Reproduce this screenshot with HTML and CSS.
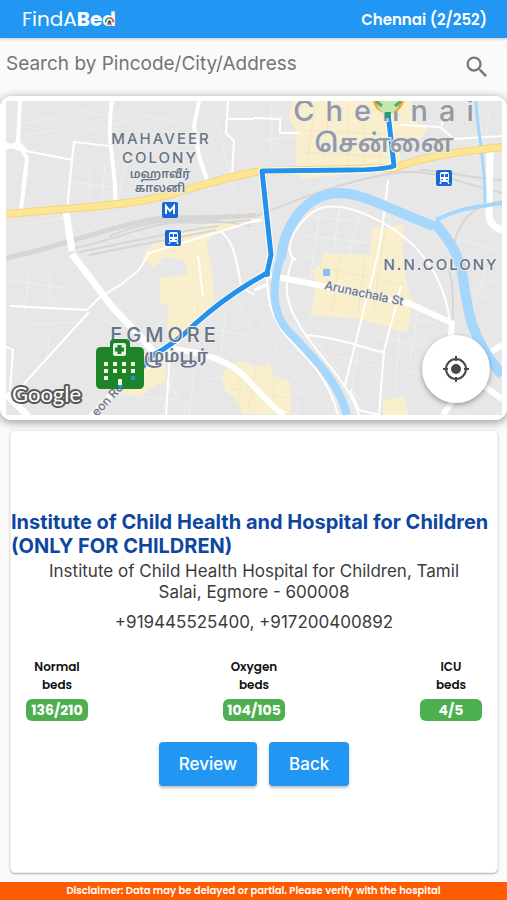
FILE: index.html
```html
<!DOCTYPE html>
<html lang="en">
<head>
<meta charset="utf-8">
<meta name="viewport" content="width=device-width, initial-scale=1">
<title>FindABed</title>
<link rel="stylesheet" href="styles.css">
</head>
<body>
<header class="topbar">
  <div class="brand">FindA<b>Bed</b>
    <svg class="brand-mark" viewBox="0 0 10 10" aria-hidden="true"><circle cx="5" cy="5" r="4.5" fill="#fff"/><path d="M1 6a4 4 0 0 1 4-5" fill="none" stroke="#34a853" stroke-width="1.8"/><path d="M5 1a4 4 0 0 1 4 5" fill="none" stroke="#ea4335" stroke-width="1.8"/><path d="M3 8V5l2-2 2 2v3z" fill="#4a6572"/><path d="M2 8.5h6" stroke="#ea6a35" stroke-width="1"/></svg>
  </div>
  <div class="place">Chennai (2/252)</div>
</header>

<form class="search">
  <input class="search-input" type="text" aria-label="Search by Pincode/City/Address" placeholder="Search by Pincode/City/Address">
  <button class="search-button" type="button" aria-label="Search">
    <svg viewBox="0 0 24 24"><path fill="#777" d="M15.5 14h-.79l-.28-.27A6.471 6.471 0 0 0 16 9.5 6.5 6.5 0 1 0 9.5 16c1.61 0 3.09-.59 4.23-1.57l.27.28v.79l5 4.99L20.49 19l-4.99-5zm-6 0C7.01 14 5 11.99 5 9.5S7.01 5 9.5 5 14 7.01 14 9.5 11.99 14 9.5 14z"/></svg>
  </button>
</form>

<main class="content">
<section class="map" aria-label="Map">
  <svg class="map-canvas" viewBox="6 101 496 314" preserveAspectRatio="xMidYMid slice">
    <rect x="6" y="101" width="496" height="314" fill="#e7e7e8"/>

    <g fill="none" stroke="#f0f0f1" stroke-width="1">
      <path d="M18 125l40-8M25 135l34-5M80 110l50 12M90 130l30-6M140 115l40 8M90 170v40M105 165l-4 45M125 165l-8 40M30 165l-10 45M60 180l60 8M215 115l20 80M190 130l20 60M20 225l50-8M110 222l30 14M95 235l55-14M225 200l15 20"/>
      <path d="M10 280l55 8M30 265l-6 50M50 270v40M85 275l-35 30M100 320l40 10M110 290l25-20M140 280l-16 20M30 325l60-4M50 335l-5 35M160 375l30 35M175 370l-12 40M195 365l-6 50M205 380l35-6M120 395l60 5M215 330l35 5M225 315l-6 60M232 290l20 40"/>
      <path d="M305 215l60 8M300 235l70 8M320 210l-10 70M340 205l-12 90M360 210l-14 60M300 255l30 6M380 310l60 15M370 335l70 15M345 330l-50 30M330 355l50 12M360 340l-12 70M315 340l45 60M400 330l-5 60M405 370l40 10M420 300l-10 60M450 300l45-20M485 270l-15 50M480 295l22 10M395 115l50 8M480 120l-5 40M490 110l-6 40"/>
      <path d="M270 115l25 6M265 140l35-4M272 105v50M420 175l60 8M435 215l60-12M445 235l50 15M345 180l-35 10M290 390l40 15M260 320l35 60M300 400l-5 15"/>
    </g>

    <g fill="#f9efcd">
      <path d="M292 101h118l2 17 16 10-8 12-20 3v25l-98 11-6-5v-42l-7-15z"/>
      <path d="M323 253l47 2 2-24 32-7-2 30 5 31 3 12-3 35-53-14-44-3 6-30-4-15 9-5z"/>
      <path d="M373 226l30 6-4 46-28 2zM407 295l6 2-5 35-15-3z"/>
      <path d="M142 259c8-19 27-25 47-28l42-15 24-6v11l-42 14-7 8 6 26 2 34-20 18-12 18-15-2 1-33h-8v-26l28-4-4-14-20-3-10 10z"/>
      <path d="M120 388l25-36 20-3 1 32-17 7-8 8-18-2zM228 364l18-2 12 6 12-6 4 26 17 4v22h-48l-8-16-10-8-3-14zM383 400l22-3 3 18h-25z"/>
      <path d="M254 366h10l4 8 22 7v33h-36z"/>
    </g>
    <g fill="none" stroke="#f2e7c0">
      <path d="M303 130l98 5M300 152l95 5M315 103l-8 60M330 103l-8 65M347 103v65M365 125v45M380 130v35M320 267l85 18M325 285l78 15M340 255l-8 58M365 258l-8 65M385 232l-12 80M162 304h28M198 305l-4 30M232 372l38 34M240 365v45M256 370l-8 40M274 375v38M230 388l58 10"/>
    </g>

    <g fill="none" stroke="#d5d6d8" stroke-linecap="round">
      <path d="M6 258c60-12 95-30 150-39 35-3 70 0 98-4" stroke-width="5"/>
      <path d="M75 248c50-10 70-26 120-27M80 252c50-10 80-18 138-26M90 255c45-10 75-14 125-25M110 236c40-18 90-20 140-10M140 221c40 1 70 4 110-1" stroke-width="2"/>
      <path d="M254 217c40-16 85-35 140-44 40-5 65 10 108 20M420 170c30 1 45 8 82 10M502 201c-30 4-45 20-49 50M449 270c5 15 4 40 4 67" stroke-width="2"/>
    </g>

    <g fill="none" stroke="#fff" stroke-linejoin="round">
      <path d="M20 101l-2 42-12 5M6 144l16 6 5 8-6 52M18 143l8 8" stroke-width="4"/>
      <path d="M26 151l46 9-5 50M72 160l2-18 35 4" stroke-width="2"/>
      <path d="M112 101c-7 42 5 67 3 100M199 101l-5 25 5 30 8 24" stroke-width="4"/>
      <path d="M228 101l-2 32 8 8-2 34M227 119h27M254 118l26 1v14h20M400 125l40 2 14 12 48-3M442 126l2-16" stroke-width="2"/>
      <path d="M66 211l6 40M72 254l41 54 28 29 15 18M6 394l22 22" stroke-width="7"/>
      <path d="M254 221l-45 14-60 18-10 17-20 16-19 11-13 13-77-4M89 312l-67 74M220 231c10 7 16 20 21 56l13 8M198 255l5 42M6 347l7 3-3 40M170 352l-4 63" stroke-width="2"/>
      <path d="M92 415l35-37M161 348c30 2 65 8 85 30 16 16 23 27 38 37M262 274l56 11 90 18 44 20-2 25M502 345l-19 12-40 58M483 385l19 14" stroke-width="6"/>
      <path d="M296 260c-18-10 5-45 25-52 25-7 70 14 95 40 18 20 30 42 34 75M293 258c-14 35-2 56 14 79 20 27 42 48 52 78M267 276c0 30 8 49 25 66 20 21 37 38 46 73M305 335c30 2 49 10 80 18M388 180c-4 36-7 70-21 117l-22 88M401 286l-17 65-5 64M350 390l9 20 20 5" stroke-width="2"/>
      <path d="M490 152l-1 62q0 12 13 16" stroke-width="7"/>
      <path d="M254 221l8-1M266 285l-12 5" stroke-width="3"/>
    </g>

    <g fill="none" stroke="#a4d7fb" stroke-linejoin="round">
      <path d="M281 260c2-31 22-65 57-67 27 0 52 17 96 33" stroke-width="10"/>
      <path d="M281 256c-11 35-8 60 9 77 26 27 49 50 57 82" stroke-width="8"/>
      <path d="M434 222c19 22 26 37 29 56 5 35 8 60 39 97" stroke-width="10"/>
      <path d="M436 220c25-13 43-13 66-17" stroke-width="4"/>
      <path d="M476 101c1 30 10 65 9 102" stroke-width="3"/>
    </g>
    <path d="M323 269h7v7h-7z" fill="#83c2f6"/>

    <g fill="none" stroke-linejoin="round">
      <path d="M6 214l59-5c60-5 88-8 120-19 31-9 54-16 77-19l132-3c35-13 65-16 108-21" stroke="#f5d57a" stroke-width="8"/>
      <path d="M6 214l59-5c60-5 88-8 120-19 31-9 54-16 77-19l132-3c35-13 65-16 108-21" stroke="#fee596" stroke-width="6"/>
    </g>

    <text class="street" x="324" y="289" transform="rotate(12 324 289)">Arunachala St</text>
    <text class="street" x="97" y="417" transform="rotate(-47 97 417)">eon Road</text>

    <g fill="none" stroke-linejoin="round" stroke-linecap="round">
      <path d="M388 113l6 53q-12 4-45 4l-87 1 9 84-4 18-17 10q-28 17-55 41-18 18-43 32l-20 23" stroke="#fff" stroke-width="7"/>
      <path d="M388 113l6 53q-12 4-45 4l-87 1 9 84-4 18-17 10q-28 17-55 41-18 18-43 32l-20 23" stroke="#2491ea" stroke-width="5"/>
      <circle cx="267" cy="274" r="3" fill="#2491ea"/>
    </g>

    <g class="district" text-anchor="middle">
      <text x="161" y="144" class="spaced">MAHAVEER</text>
      <text x="160" y="163" class="spaced">COLONY</text>
      <text x="160" y="178" class="tamil-small">மஹாவீர்</text>
      <text x="160" y="192" class="tamil-small">காலனி</text>
      <text x="441" y="270" class="spaced">N.N.COLONY</text>
      <text x="165" y="342" class="large-spaced">EGMORE</text>
      <text x="169" y="362" class="tamil-mid">எழும்பூர்</text>
    </g>
    <g class="city" text-anchor="middle">
      <text x="389" y="121" class="city-name">Chennai</text>
      <text x="384" y="152" class="tamil-large">சென்னை</text>
    </g>

    <path d="M373 101h31c-2 8-7 12-16 12s-13-4-15-12z" fill="#f4a63a"/>
    <path d="M378 101h20c4 16-24 16-20 0z" fill="#c4e6af"/>
    <path d="M376 101l6 5M401 101l-6 5" stroke="#58af64" stroke-width="3"/>
    <path d="M385 112h6v6h-6z" fill="#229b82"/>

    <g>
      <rect x="162" y="202" width="16" height="16" rx="2" fill="#1967d2"/>
      <path d="M166 214v-8l4 5 4-5v8" fill="none" stroke="#fff" stroke-width="2"/>
    </g>
    <g id="station">
      <rect x="165" y="230" width="16" height="16" rx="2" fill="#1967d2"/>
      <rect x="169" y="232" width="9" height="10" rx="2" fill="#fff"/>
      <path d="M170 234h3v3h-3zM174 234h3v3h-3zM170 239h2v1h-2zM175 239h2v1h-2z" fill="#1967d2"/>
      <path d="M170 242l-1 2M177 242l1 2" stroke="#fff" stroke-width="1.5"/>
    </g>
    <use href="#station" x="271" y="-60"/>

    <path fill="#1d8428" d="M101 347h9v-4q0-4 4-4h11q5 0 5 4v4h9q5 0 5 5v32q0 5-5 5h-38q-5 0-5-5v-32q0-5 5-5z"/>
    <path d="M104 362h4v4h-4zM113 362h4v4h-4zM122 362h4v4h-4zM131 362h4v4h-4zM104 369h4v4h-4zM113 369h4v4h-4zM122 369h4v4h-4zM131 369h4v4h-4zM104 376h4v4h-4zM118 379h4v6h-4z" fill="#f3f3df"/>
    <rect x="113" y="343" width="13" height="13" rx="2" fill="#e9f0e5"/>
    <path d="M119.500 345v9M115 349.500h9" stroke="#1d8428" stroke-width="4"/>
    <path d="M131 376h4v4h-4zM118 385h5l-3 5z" fill="#2491ea"/>
    <text class="google" x="12" y="402">Google</text>
  </svg>
  <button class="locate" type="button" aria-label="My location">
    <svg viewBox="0 0 28 28"><g fill="none" stroke="#484848" stroke-width="2"><circle cx="14" cy="14" r="10"/><path d="M14 1v5M14 22v5M1 14h5M22 14h5"/></g><circle cx="14" cy="14" r="5" fill="#484848"/></svg>
  </button>
</section>

<article class="card">
  <h1 class="name">Institute of Child Health and Hospital for Children (ONLY FOR CHILDREN)</h1>
  <p class="address">Institute of Child Health Hospital for Children, Tamil Salai, Egmore - 600008</p>
  <p class="phones">+919445525400, +917200400892</p>
  <dl class="beds">
    <div class="bed"><dt>Normal beds</dt><dd>136/210</dd></div>
    <div class="bed"><dt>Oxygen beds</dt><dd>104/105</dd></div>
    <div class="bed"><dt>ICU beds</dt><dd>4/5</dd></div>
  </dl>
  <div class="actions">
    <button class="action" type="button">Review</button>
    <button class="action" type="button">Back</button>
  </div>
</article>
</main>

<footer class="disclaimer">Disclaimer: Data may be delayed or partial. Please verify with the hospital</footer>
</body>
</html>
```
FILE: styles.css
```css
* { box-sizing: border-box; }

body {
  margin: 0;
  min-height: 100vh;
  display: flex;
  flex-direction: column;
  background: #fafafa;
  color: #3c3c3c;
  font-family: Inter, "Liberation Sans", sans-serif;
}

.topbar {
  display: flex;
  align-items: center;
  justify-content: space-between;
  height: 38px;
  padding: 0 20px 0 22px;
  background: #2196f3;
  color: #fff;
  font-family: Poppins, Inter, sans-serif;
  box-shadow: 0 1px 3px rgba(0, 0, 0, .2);
}

.brand {
  position: relative;
  font-family: Poppins, Lato, sans-serif;
  font-size: 20px;
  line-height: 24px;
}

.brand-mark {
  position: absolute;
  right: 2px;
  bottom: 5px;
  width: 9px;
  height: 9px;
}

.place {
  font-size: 15px;
  font-weight: 600;
}

.search {
  display: flex;
  align-items: center;
  height: 58px;
  padding: 0 16px 0 6px;
}

.search-input {
  flex: 1;
  min-width: 0;
  padding: 0 0 6px;
  border: 0;
  outline: 0;
  background: none;
  font: 19px/24px Inter, sans-serif;
}

.search-input::placeholder { color: #757575; opacity: 1; }

.search-button {
  width: 28px;
  height: 28px;
  padding: 0;
  border: 0;
  background: none;
}

.search-button svg { display: block; width: 100%; }

.content {
  flex: 1;
  display: flex;
  flex-direction: column;
}

.map {
  position: relative;
  flex: none;
  border: solid #fff;
  border-width: 5px 5px 5px 6px;
  border-radius: 12px;
  box-shadow: 0 2px 8px 1px rgba(0, 0, 0, .35);
}

.map-canvas { display: block; width: 100%; }

.district, .city, .street {
  paint-order: stroke;
  stroke: #ececee;
  stroke-width: 2px;
  fill: #667484;
  font-family: Inter, "Noto Sans Tamil", "Noto Sans", sans-serif;
}

.spaced { font-size: 15px; font-weight: 500; letter-spacing: 2px; }
.large-spaced { font-size: 20px; font-weight: 500; letter-spacing: 4px; }
.tamil-small { font-size: 12px; font-weight: 600; }
.tamil-mid { font-size: 17px; font-weight: 600; }
.city { fill: #9599a2; }
.city-name { font-size: 29px; font-weight: 500; letter-spacing: 11px; }
.tamil-large { font-size: 25px; font-weight: 600; }
.street { font-size: 12px; font-weight: 500; fill: #6f7680; }

.google {
  paint-order: stroke;
  stroke: #595959;
  stroke-width: 4px;
  stroke-linejoin: round;
  fill: #fff;
  font: 22px Lato, sans-serif;
}

.locate {
  position: absolute;
  right: 12px;
  bottom: 12px;
  display: grid;
  place-items: center;
  width: 68px;
  height: 68px;
  padding: 0;
  border: 0;
  border-radius: 50%;
  background: #fff;
  box-shadow: 0 2px 5px rgba(0, 0, 0, .35);
}

.locate svg { width: 28px; height: 28px; }

.card {
  flex: 1;
  display: flex;
  flex-direction: column;
  justify-content: center;
  margin: 10px 9px 9px 10px;
  padding-bottom: 8px;
  border: 1px solid #efefef;
  border-radius: 5px;
  background: #fff;
  box-shadow: 0 1px 2px rgba(0, 0, 0, .3);
  text-align: center;
}

.name {
  margin: 0;
  color: #0d47a1;
  font-size: 20px;
  line-height: 24px;
  font-weight: 700;
  text-align: left;
}

.address, .phones {
  font-size: 17px;
  line-height: 21px;
}

.address { margin: 3px 32px 0; }
.phones { margin: 9px 0 0; }

.beds {
  display: flex;
  justify-content: space-between;
  margin: 25px 15px 0;
}

.bed {
  width: 62px;
  color: #111;
  font-family: Poppins, Inter, sans-serif;
  font-weight: 600;
}

.bed dt {
  padding: 0 6px;
  font-size: 12px;
  line-height: 18px;
}

.bed dd {
  margin: 5px 0 0;
  border-radius: 6px;
  background: #4caf50;
  color: #fff;
  font-size: 14px;
  font-weight: 700;
  line-height: 22px;
}

.actions {
  display: flex;
  justify-content: center;
  gap: 12px;
  margin-top: 21px;
}

.action {
  height: 44px;
  padding: 0 20px;
  border: 0;
  border-radius: 4px;
  background: #2196f3;
  color: #fff;
  font: 500 17px/24px Inter, sans-serif;
  box-shadow: 0 2px 3px rgba(0, 0, 0, .25);
}

.disclaimer {
  background: #ff5c00;
  color: #fff;
  font: 600 10px/18px Poppins, Inter, sans-serif;
  text-align: center;
}
```
